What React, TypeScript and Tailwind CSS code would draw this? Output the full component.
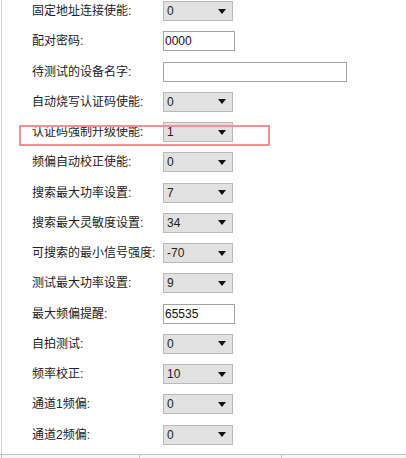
import { ReactNode } from "react";

type Field = {
  label: string;
  kind: "select" | "input" | "wide";
  value: string;
  mark?: boolean;
};

const fields: Field[] = [
  { label: "固定地址连接使能:", kind: "select", value: "0" },
  { label: "配对密码:", kind: "input", value: "0000" },
  { label: "待测试的设备名字:", kind: "wide", value: "" },
  { label: "自动烧写认证码使能:", kind: "select", value: "0" },
  { label: "认证码强制升级使能:", kind: "select", value: "1", mark: true },
  { label: "频偏自动校正使能:", kind: "select", value: "0" },
  { label: "搜索最大功率设置:", kind: "select", value: "7" },
  { label: "搜索最大灵敏度设置:", kind: "select", value: "34" },
  { label: "可搜索的最小信号强度:", kind: "select", value: "-70" },
  { label: "测试最大功率设置:", kind: "select", value: "9" },
  { label: "最大频偏提醒:", kind: "input", value: "65535" },
  { label: "自拍测试:", kind: "select", value: "0" },
  { label: "频率校正:", kind: "select", value: "10" },
  { label: "通道1频偏:", kind: "select", value: "0" },
  { label: "通道2频偏:", kind: "select", value: "0" },
];

function Select({ value }: { value: string }) {
  return (
    <div className="w-[70px] h-[20px] bg-[#e1e1e1] border border-[#b9b9b9] flex items-center justify-between pl-[3px] pr-[6px] text-[12px] text-[#222]">
      <span>{value}</span>
      <svg width="8" height="5" viewBox="0 0 8 5">
        <path d="M0 0 H8 L4 5 Z" fill="#111" />
      </svg>
    </div>
  );
}

function TextBox({ value, wide }: { value: string; wide?: boolean }) {
  return (
    <div
      className={
        "h-[20px] bg-white border border-[#a3a3a3] flex items-center pl-[1px] text-[12px] text-[#111] " +
        (wide ? "w-[184px]" : "w-[72px]")
      }
    >
      {value}
    </div>
  );
}

function Row({ f }: { f: Field }) {
  let control: ReactNode;
  if (f.kind == "select") control = <Select value={f.value} />;
  else control = <TextBox value={f.value} wide={f.kind == "wide"} />;
  return (
    <div className="relative h-[30.25px] flex items-start pt-[1px]">
      <div className="w-[131px] pl-[30px] box-content h-[20px] flex items-center text-[12px] text-[#222] whitespace-nowrap">
        {f.label}
      </div>
      {control}
      {f.mark && (
        <div className="absolute left-[17px] top-[4px] w-[251px] h-[21px] border-2 border-[#f39191]" />
      )}
    </div>
  );
}

export default function App() {
  return (
    <div
      className="w-[406px] h-[458px] overflow-hidden bg-white"
      style={{ fontFamily: '"Liberation Sans", "Noto Sans CJK SC", sans-serif' }}
    >
      <div className="border-l border-[#d6d6d6] ml-[1px]">
        {fields.map((f, i) => (
          <Row key={i} f={f} />
        ))}
      </div>
      <div className="flex h-[10px] border-t border-[#c4c4c4] bg-[#f6f6f6]">
        <div className="w-[138px] ml-[1px] border-l border-[#c4c4c4]" />
        <div className="w-[142px] border-l border-[#c4c4c4]" />
        <div className="flex-1 border-l border-[#c4c4c4]" />
      </div>
    </div>
  );
}
